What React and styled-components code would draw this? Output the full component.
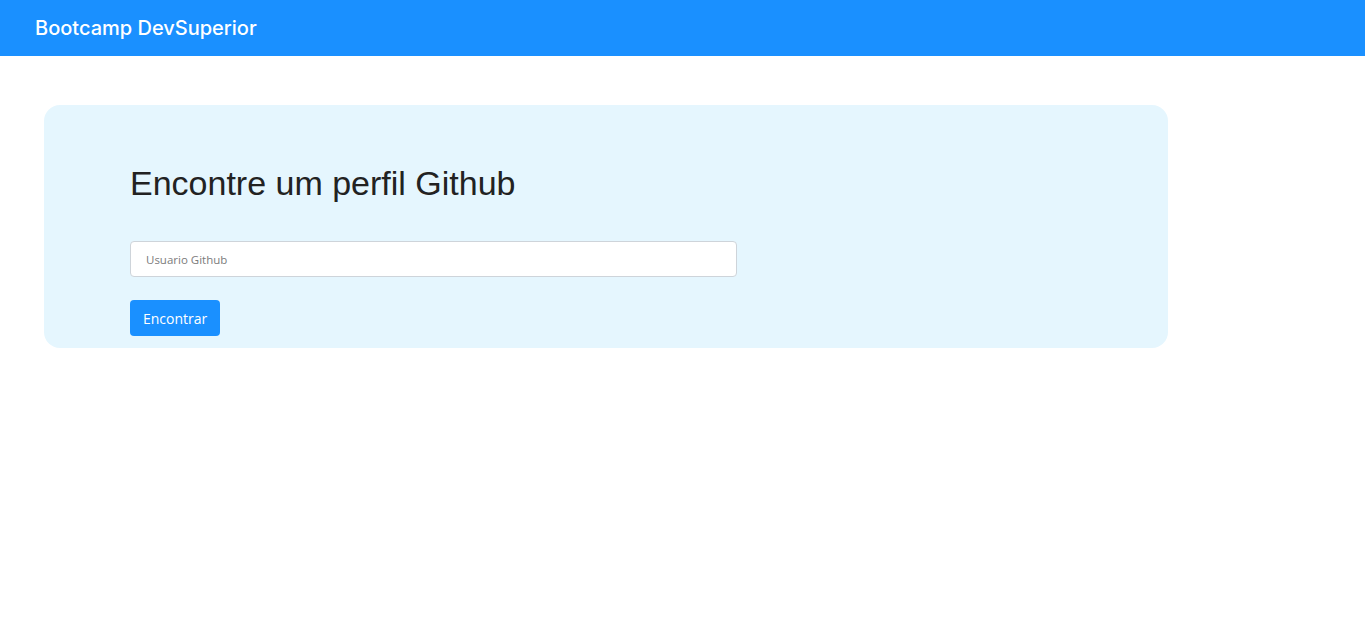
import React from "react";
import styled, { createGlobalStyle } from "styled-components";

const GlobalStyle = createGlobalStyle`
  body {
    margin: 0;
    background: #ffffff;
    font-family: "Open Sans", sans-serif;
  }
`;

const App = () => {
  return (
    <>
      <GlobalStyle />
      <Navbar>
        <Brand>Bootcamp DevSuperior</Brand>
      </Navbar>
      <Main>
        <SearchCard>
          <Title>Encontre um perfil Github</Title>
          <SearchInput type="text" placeholder="Usuario Github" />
          <FindButton>Encontrar</FindButton>
        </SearchCard>
      </Main>
    </>
  );
};

const Navbar = styled.header`
  height: 56px;
  background: #1a90ff;
  display: flex;
  align-items: center;
  padding: 0 35px;
`;

const Brand = styled.h1`
  margin: 0;
  color: #ffffff;
  font-family: Inter, Roboto, sans-serif;
  font-weight: 500;
  font-size: 20px;
`;

const Main = styled.main`
  padding: 49px 197px 0 44px;
`;

const SearchCard = styled.section`
  background: #e5f6fe;
  border-radius: 16px;
  padding: 59px 86px 12px;
  display: flex;
  flex-direction: column;
  align-items: flex-start;
`;

const Title = styled.h2`
  margin: 0 0 38px;
  font-family: "Liberation Sans", Arial, sans-serif;
  font-weight: 400;
  font-size: 34px;
  line-height: 39px;
  color: #222222;
`;

const SearchInput = styled.input`
  box-sizing: border-box;
  width: 607px;
  height: 36px;
  padding: 0 15px;
  border: 1px solid #ced4da;
  border-radius: 4px;
  background: #ffffff;
  font-family: "Open Sans", sans-serif;
  font-size: 11.5px;
  outline: none;

  &::placeholder {
    color: #7b7b7b;
  }
`;

const FindButton = styled.button`
  margin-top: 23px;
  height: 36px;
  padding: 0 13px;
  border: none;
  border-radius: 4px;
  background: #1a90ff;
  color: #ffffff;
  font-family: "Open Sans", sans-serif;
  font-size: 14px;
  cursor: pointer;
`;

export default App;
